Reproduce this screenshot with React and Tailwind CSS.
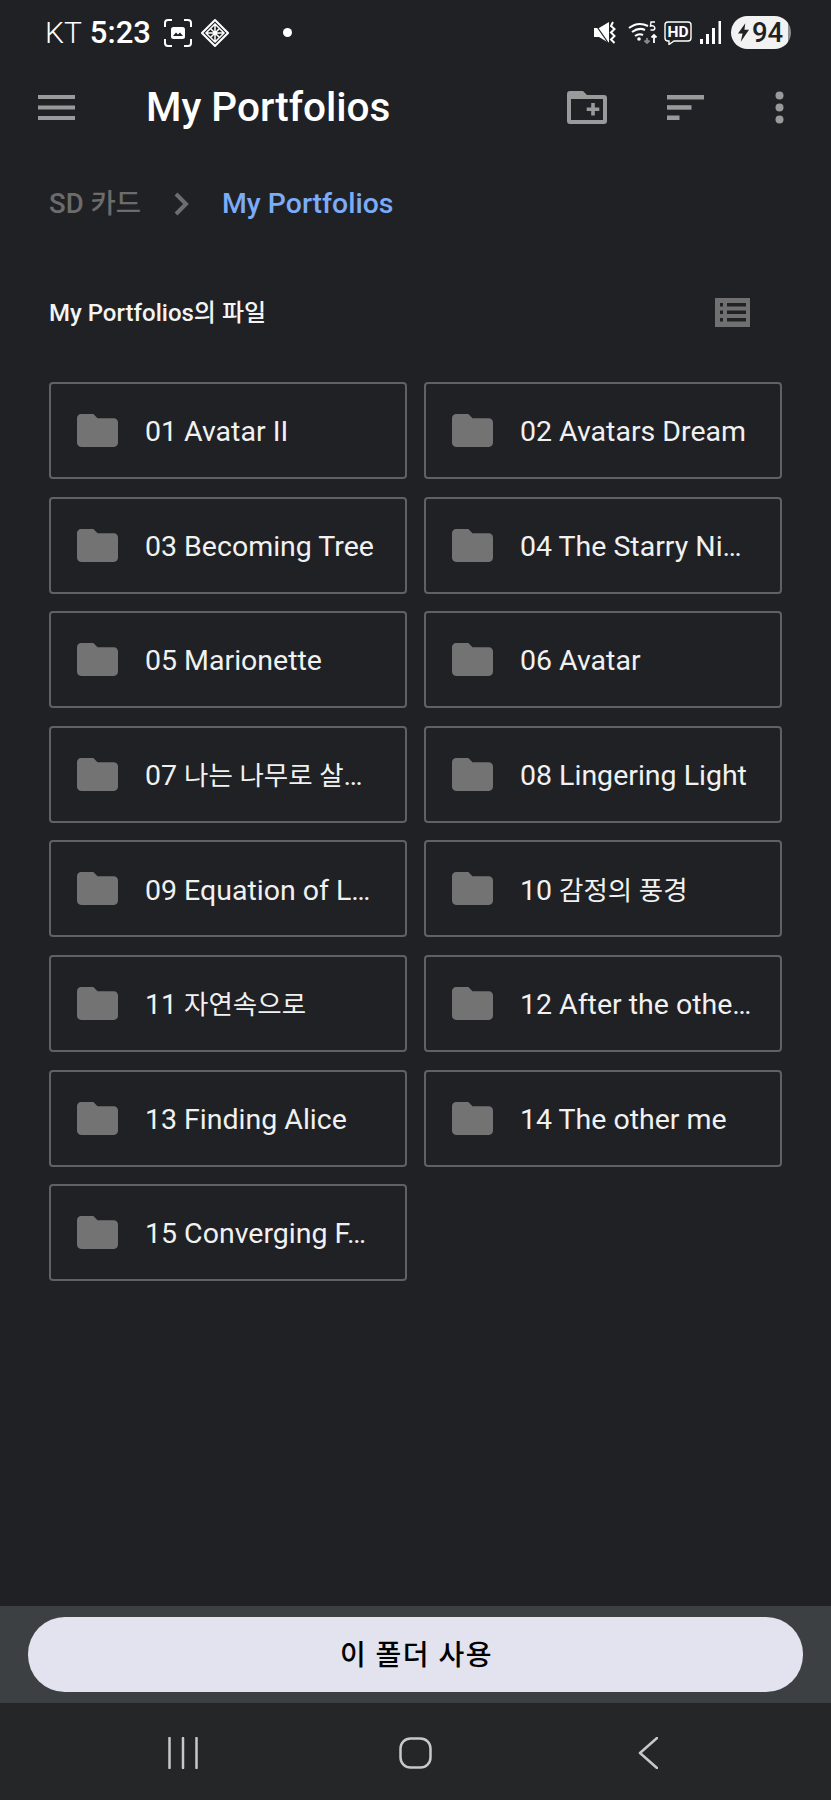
import React from 'react'

const folders = [
  '01 Avatar II',
  '02 Avatars Dream',
  '03 Becoming Tree',
  '04 The Starry Ni…',
  '05 Marionette',
  '06 Avatar',
  '07 나는 나무로 살…',
  '08 Lingering Light',
  '09 Equation of L…',
  '10 감정의 풍경',
  '11 자연속으로',
  '12 After the othe…',
  '13 Finding Alice',
  '14 The other me',
  '15 Converging F…',
]

function FolderIcon() {
  return (
    <svg viewBox="2 4 20 16" className="w-[41px] h-[33px] shrink-0 fill-[#737373]">
      <path d="M10 4H4c-1.1 0-2 .9-2 2v12c0 1.1.9 2 2 2h16c1.1 0 2-.9 2-2V8c0-1.1-.9-2-2-2h-8l-2-2z" />
    </svg>
  )
}

// hangul runs a bit smaller, the phone font has narrower hangul than Noto
function FolderName({ name }) {
  const parts = name.split(/([가-힣]+(?: [가-힣]+)*)/)
  return (
    <p className="ml-[27px] mt-[4px] text-[28.5px] text-[#f1f1f1] whitespace-nowrap">
      {parts.map((part, i) => (i % 2 === 1 ? <span key={i} className="text-[26.5px]">{part}</span> : part))}
    </p>
  )
}

function FolderCard({ name }) {
  return (
    <div className="h-[97px] flex flex-row items-center pl-[26px] border-2 border-[#5f6165] rounded-[4px]">
      <FolderIcon />
      <FolderName name={name} />
    </div>
  )
}

function StatusBar() {
  return (
    <div className="h-[65px] flex flex-row items-center text-white">
      <span className="ml-[45px] text-[30px] font-light leading-none">KT</span>
      <span className="ml-[8px] text-[31px] font-medium leading-none">5:23</span>
      <svg viewBox="0 0 28 28" className="ml-[13px] w-[28px] h-[28px] fill-none stroke-white stroke-[2]">
        <path d="M1 8V4q0-3 3-3h4M20 1h4q3 0 3 3v4M27 20v4q0 3-3 3h-4M8 27H4q-3 0-3-3v-4" />
        <rect x="7" y="8" width="14" height="12" rx="2.500" fill="#fff" stroke="none" />
        <path d="M9 17l3-3.500 2 2 2-2 3 3.500z" fill="#202125" stroke="none" />
      </svg>
      <svg viewBox="0 0 28 28" className="ml-[9px] w-[28px] h-[28px] fill-none stroke-white stroke-[1.5]">
        <path d="M14 1l13 13-13 13L1 14z" strokeWidth="2" />
        <path d="M14 5l9 9-9 9-9-9zM9 9l10 10M19 9L9 19M14 5v18M5 14h18" />
      </svg>
      <span className="ml-[54px] w-[9px] h-[9px] rounded-full bg-white" />
      <svg viewBox="0 0 24 23" className="ml-[301px] w-[24px] h-[23px] fill-white">
        <path d="M1 7h5l10-6v21L6 16H1z" />
        <path d="M0 0l16 23" stroke="#202125" strokeWidth="1.2" />
        <path d="M20 1l-2 4 3.500 3-3.500 3.500 3.500 3.500-3.500 3.500 3.500 3.500" fill="none" stroke="#fff" strokeWidth="2" />
      </svg>
      <svg viewBox="0 0 30 23" className="ml-[11px] w-[30px] h-[23px] fill-none stroke-white">
        <path d="M1 7q9-7 19-2M4 11q7-5 13-2M7 15q4-3 8-1" strokeWidth="2" />
        <circle cx="11" cy="18" r="1.800" fill="#fff" stroke="none" />
        <path d="M19 17v5M16.500 19.500l2.500 2.500 2.500-2.500" stroke="#8a8a8a" strokeWidth="1.8" />
        <path d="M26 22v-8M23.500 16.500l2.500-2.500 2.500 2.500" strokeWidth="1.8" />
        <path d="M27 1h-4l-.5 4q3-1 4 1t-1 3h-3" strokeWidth="1.4" />
      </svg>
      <svg viewBox="0 0 28 24" className="ml-[6px] w-[28px] h-[24px]">
        <path d="M4 1h20q3 0 3 3v13q0 3-3 3H10l-5 3.500V20H4q-3 0-3-3V4q0-3 3-3z" fill="none" stroke="#fff" strokeWidth="1.4" />
        <text x="14" y="16" textAnchor="middle" fontSize="15.5" fontWeight="700" fill="#fff" fontFamily="Roboto, sans-serif">HD</text>
      </svg>
      <svg viewBox="0 0 22 23" className="ml-[8px] w-[22px] h-[23px] fill-white">
        <rect x="0" y="18" width="3" height="5" />
        <rect x="6" y="13" width="3" height="10" />
        <rect x="12" y="7" width="3" height="16" />
        <rect x="18.500" y="0" width="2.500" height="23" />
      </svg>
      <div className="ml-[9px] w-[60px] h-[33px] flex flex-row items-center pl-[7px] rounded-full bg-[linear-gradient(90deg,#f2f2f2_95%,#8e8e8e_95%)] text-[#202125]">
        <svg viewBox="0 0 12 20" className="w-[11px] h-[19px] fill-[#202125]">
          <path d="M8 0L0 11h5l-2 9 9-13H7z" />
        </svg>
        <span className="ml-[3px] text-[27.5px] font-medium leading-none">94</span>
      </div>
    </div>
  )
}

function Toolbar() {
  return (
    <div className="h-[84px] flex flex-row items-center">
      <svg viewBox="0 0 37 25" className="ml-[38px] w-[37px] h-[25px] fill-[#9a9a9a]">
        <rect width="37" height="4" />
        <rect y="10.500" width="37" height="4" />
        <rect y="21" width="37" height="4" />
      </svg>
      <h1 className="ml-[71px] text-[40.5px] font-medium text-white leading-none">My Portfolios</h1>
      <svg viewBox="0 0 40 33" className="ml-[177px] w-[40px] h-[33px] fill-[#9a9a9a]">
        <path
          fillRule="evenodd"
          d="M3 0h13l4 4h17q3 0 3 3v23q0 3-3 3H3q-3 0-3-3V3q0-3 3-3zM4 8v21h32V8z"
        />
        <path d="M24.200 12h3.600v4.500h4.500v3.600h-4.500v4.500h-3.600v-4.500h-4.500v-3.600h4.500z" />
      </svg>
      <svg viewBox="0 0 37 25" className="ml-[60px] w-[37px] h-[25px] fill-[#9a9a9a]">
        <rect width="37" height="4.500" />
        <rect y="10.200" width="24.500" height="4.500" />
        <rect y="20.500" width="12.500" height="4.500" />
      </svg>
      <svg viewBox="0 0 9 33" className="ml-[71px] w-[9px] h-[33px] fill-[#9a9a9a]">
        <circle cx="4.500" cy="4.500" r="4" />
        <circle cx="4.500" cy="16.500" r="4" />
        <circle cx="4.500" cy="28.500" r="4" />
      </svg>
    </div>
  )
}

function Breadcrumb() {
  return (
    <div className="h-[60px] mt-[25px] flex flex-row items-center pl-[49px]">
      <span className="text-[27.5px] font-medium text-[#6c6c6c]">SD 카드</span>
      <svg viewBox="0 0 16 24" className="ml-[33px] w-[16px] h-[24px] fill-none stroke-[#6e6e6e] stroke-[4]">
        <path d="M2 2l10 10L2 22" />
      </svg>
      <span className="ml-[32px] text-[28.4px] font-medium text-[#7cacf8]">My Portfolios</span>
    </div>
  )
}

export default function App() {
  return (
    <div className="w-[831px] h-[1800px] flex flex-col bg-[#202125] font-['Roboto','Noto_Sans_CJK_KR',sans-serif]">
      <StatusBar />
      <Toolbar />
      <Breadcrumb />

      <div className="mt-[48px] h-[60px] flex flex-row items-center pl-[49px]">
        <p className="pt-[1px] text-[24px] font-medium text-[#f4f4f4]">My Portfolios의 파일</p>
        <svg viewBox="0 0 35 29" className="ml-auto mr-[81px] w-[35px] h-[29px]">
          <rect width="35" height="29" fill="#707070" />
          <rect x="5" y="5" width="3" height="3.500" fill="#202125" />
          <rect x="5" y="12.500" width="3" height="3.500" fill="#202125" />
          <rect x="5" y="20" width="3" height="3.500" fill="#202125" />
          <rect x="12" y="5" width="19" height="3.500" fill="#202125" />
          <rect x="12" y="12.500" width="19" height="3.500" fill="#202125" />
          <rect x="12" y="20" width="19" height="3.500" fill="#202125" />
        </svg>
      </div>

      <div className="mt-[40px] ml-[49px] mr-[49px] grid grid-cols-2 gap-x-[17px] gap-y-[17.6px]">
        {folders.map((name) => (
          <FolderCard key={name} name={name} />
        ))}
      </div>

      <div className="mt-auto h-[97px] flex items-center px-[28px] bg-[#3c4043]">
        <button className="w-full h-[75px] pt-[3px] pl-[2px] rounded-[37px] bg-[#e2e3ef] text-[28px] font-medium tracking-[1.5px] text-black">
          이 폴더 사용
        </button>
      </div>

      <div className="h-[97px] pt-[3px] pl-[168px] flex flex-row items-center bg-[#252628]">
        <svg viewBox="0 0 30 32" className="w-[30px] h-[32px] stroke-[#c8c8c8] stroke-[2.5]" strokeLinecap="round">
          <path d="M1.500 1v30M15 1v30M28.500 1v30" />
        </svg>
        <svg viewBox="0 0 33 32" className="ml-[201px] w-[33px] h-[32px] fill-none stroke-[#c8c8c8] stroke-[2.5]">
          <rect x="1.500" y="1.500" width="30" height="29" rx="10" />
        </svg>
        <svg viewBox="0 0 20 32" className="ml-[206px] w-[20px] h-[32px] fill-none stroke-[#c8c8c8] stroke-[2.5]" strokeLinecap="round" strokeLinejoin="round">
          <path d="M19 1L2 16l17 15" />
        </svg>
      </div>
    </div>
  )
}
